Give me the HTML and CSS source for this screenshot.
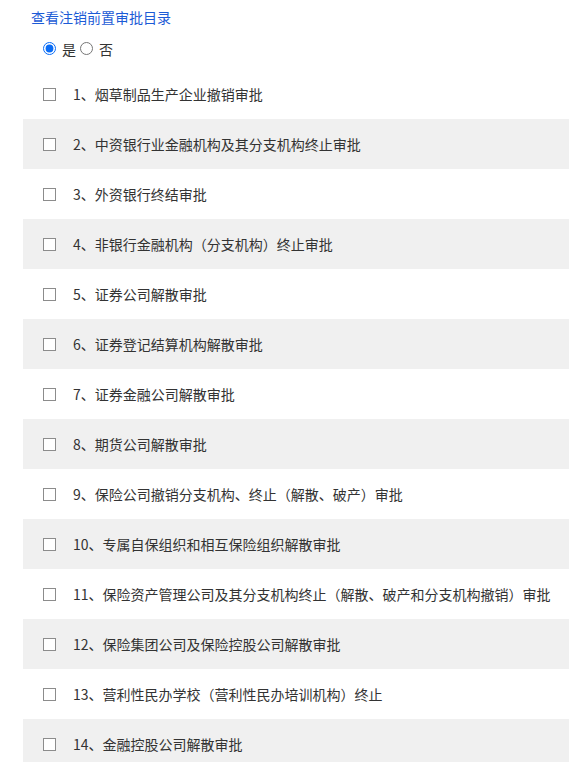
FILE: index.html
```html
<!DOCTYPE html>
<html lang="zh-CN">
<head>
  <meta charset="UTF-8">
  <title>查看注销前置审批目录</title>
  <link rel="stylesheet" href="styles.css">
</head>
<body>
  <div class="panel">
    <a class="title" href="#">查看注销前置审批目录</a>

    <div class="radios">
      <label><input type="radio" name="show" checked> 是</label>
      <label><input type="radio" name="show"> 否</label>
    </div>

    <ul class="list">
      <li><span class="box"></span>1、烟草制品生产企业撤销审批</li>
      <li><span class="box"></span>2、中资银行业金融机构及其分支机构终止审批</li>
      <li><span class="box"></span>3、外资银行终结审批</li>
      <li><span class="box"></span>4、非银行金融机构（分支机构）终止审批</li>
      <li><span class="box"></span>5、证券公司解散审批</li>
      <li><span class="box"></span>6、证券登记结算机构解散审批</li>
      <li><span class="box"></span>7、证券金融公司解散审批</li>
      <li><span class="box"></span>8、期货公司解散审批</li>
      <li><span class="box"></span>9、保险公司撤销分支机构、终止（解散、破产）审批</li>
      <li><span class="box"></span>10、专属自保组织和相互保险组织解散审批</li>
      <li><span class="box"></span>11、保险资产管理公司及其分支机构终止（解散、破产和分支机构撤销）审批</li>
      <li><span class="box"></span>12、保险集团公司及保险控股公司解散审批</li>
      <li><span class="box"></span>13、营利性民办学校（营利性民办培训机构）终止</li>
      <li><span class="box"></span>14、金融控股公司解散审批</li>
    </ul>
  </div>
</body>
</html>
```

FILE: styles.css
```css
body {
  margin: 0;
  background-color: #fff;
  color: #333;
  font-family: "Noto Sans CJK SC", "Noto Sans", sans-serif;
  font-size: 14px;
}
.panel {
  padding-left: 23px;
}
.title {
  display: block;
  padding: 7px 0 0 8px;
  height: 21px;
  line-height: 21px;
  color: #1c5bd6;
  text-decoration: none;
}
.radios {
  display: flex;
  align-items: center;
  gap: 4px;
  height: 41px;
  padding-left: 20px;
}
.radios label {
  display: flex;
  align-items: center;
  gap: 6px;
  line-height: 20px;
  color: #333;
}
.radios input {
  margin: 0;
  width: 13px;
  height: 13px;
  accent-color: #0a6cf5;
}
.list {
  list-style: none;
  margin: 0;
  padding: 0;
}
.list li {
  display: flex;
  align-items: center;
  height: 50px;
  padding-left: 20px;
  white-space: nowrap;
}
.list li:nth-child(even) {
  background-color: #f0f0f0;
}
.box {
  width: 11px;
  height: 11px;
  border: 1px solid #8c8c8c;
  background-color: #fff;
  margin-right: 17px;
  flex-shrink: 0;
}
```
